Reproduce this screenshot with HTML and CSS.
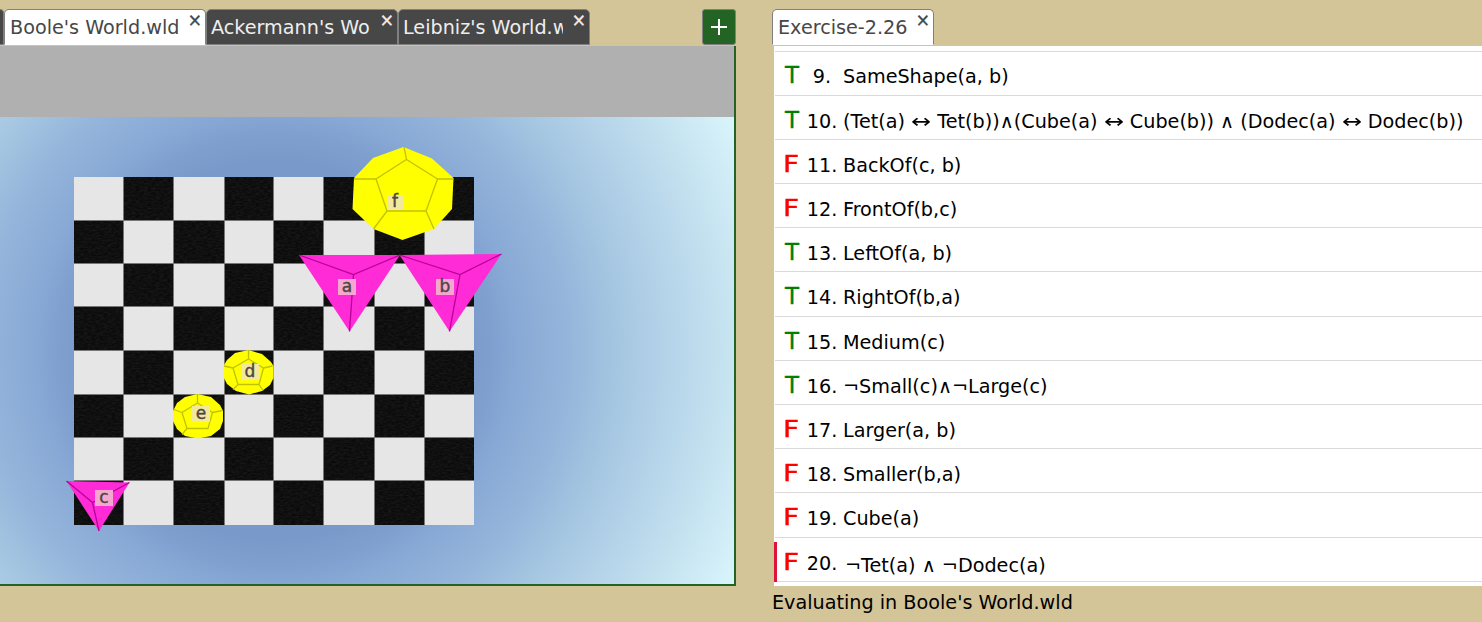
FILE: index.html
```html
<!DOCTYPE html>
<html lang="en">
<head>
<meta charset="utf-8">
<title>Boole's World</title>
<link rel="stylesheet" href="styles.css">
</head>
<body>
<main class="app">
  <section class="world">
    <div class="tabs">
      <div class="tab tab-edge"></div>
      <div class="tab tab-first active"><span class="name">Boole's World.wld</span><span class="close">×</span></div>
      <div class="tab"><span class="name">Ackermann's Wo</span><span class="close">×</span></div>
      <div class="tab"><span class="name">Leibniz's World.w</span><span class="close">×</span></div>
      <button class="add"><svg width="18" height="18" viewBox="0 0 18 18"><path d="M9 1v16M1 9h16"/></svg></button>
    </div>
    <div class="stage">
      <div class="toolbar"></div>
      <svg class="scene" width="734" height="467" viewBox="0 117 734 467">
        <defs>
          <radialGradient id="sky" gradientUnits="userSpaceOnUse" cx="275" cy="350" r="525">
            <stop offset="0.36" stop-color="#7999ca"/>
            <stop offset="0.41" stop-color="#7fa0cf"/>
            <stop offset="0.46" stop-color="#88a9d5"/>
            <stop offset="0.56" stop-color="#95b5db"/>
            <stop offset="0.64" stop-color="#a3c4e0"/>
            <stop offset="0.73" stop-color="#b2d1e8"/>
            <stop offset="0.84" stop-color="#c3e0ef"/>
            <stop offset="0.98" stop-color="#d9f5fc"/>
          </radialGradient>
          <filter id="grain" x="0" y="0" width="1" height="1" color-interpolation-filters="sRGB">
            <feTurbulence type="fractalNoise" baseFrequency="0.25 0.6" numOctaves="2" result="n"/>
            <feColorMatrix in="n" type="matrix" values="0 0 0 0 0.3  0 0 0 0 0.3  0 0 0 0 0.3  0.4 0 0 0 -0.12" result="g"/>
            <feComposite in="g" in2="SourceGraphic" operator="in" result="m"/>
            <feMerge><feMergeNode in="SourceGraphic"/><feMergeNode in="m"/></feMerge>
          </filter>
        </defs>
        <rect y="117" width="734" height="467" fill="url(#sky)"/>
        <rect x="74" y="177" width="400" height="348" fill="#e6e6e6"/>
        <g class="dark" filter="url(#grain)">
          <path d="M123.500 177h50v43.500h-50zM224.500 177h49.500v43.500h-49.500zM324 177h50v43.500h-50zM424.500 177h49.500v43.500h-49.500z"/>
          <path d="M74 220.500h49.500v43h-49.500zM174 220.500h50.500v43h-50.500zM274 220.500h50v43h-50zM374 220.500h50.500v43h-50.500z"/>
          <path d="M123.500 263.500h50v43h-50zM224.500 263.500h49.500v43h-49.500zM324 263.500h50v43h-50zM424.500 263.500h49.500v43h-49.500z"/>
          <path d="M74 306.500h49.500v44.500h-49.500zM174 306.500h50.500v44.500h-50.500zM274 306.500h50v44.500h-50zM374 306.500h50.500v44.500h-50.500z"/>
          <path d="M123.500 351h50v43.500h-50zM224.500 351h49.500v43.500h-49.500zM324 351h50v43.500h-50zM424.500 351h49.500v43.500h-49.500z"/>
          <path d="M74 394.500h49.500v43h-49.500zM174 394.500h50.500v43h-50.500zM274 394.500h50v43h-50zM374 394.500h50.500v43h-50.500z"/>
          <path d="M123.500 437.500h50v43h-50zM224.500 437.500h49.500v43h-49.500zM324 437.500h50v43h-50zM424.500 437.500h49.500v43h-49.500z"/>
          <path d="M74 480.500h49.500v44.500h-49.500zM174 480.500h50.500v44.500h-50.500zM274 480.500h50v44.500h-50zM374 480.500h50.500v44.500h-50.500z"/>
        </g>
        <path class="grid" d="M123.500 177v348M173.500 177v348M224.500 177v348M273.500 177v348M323.500 177v348M374 177v348M424.500 177v348M74 220.500h400M74 263.500h400M74 306.500h400M74 350.500h400M74 394.500h400M74 437.500h400M74 480.500h400"/>

        <g class="dodec">
          <path d="M403.500 147 432 158.500 453.500 178 452 209 434 229 402.500 240 373.500 229 352.500 209 354 178 373 158z"/>
          <path class="edge" d="M406.500 159.500 437.500 179 426 211H387L376 179zM406.500 159.500 404 147M437.500 179h16M426 211l8 18M387 211l-13.500 18M376 179h-22"/>
        </g>
        <g class="dodec">
          <path d="M248.500 350 262 354 271 362 273.500 366V378L270 385 262 391 249 394.500 236 391 227 384 223.500 377V366L227 360 235 353z"/>
          <path class="edge" d="M248.500 359 263.500 368 259 384.500H238L233 368zM248.500 359v-9M263.500 368l9-2M259 384.500l4 6M238 384.500l-5 5M233 368l-9-2"/>
        </g>
        <g class="dodec">
          <path d="M197.500 394 211 397 220 405 223 411V421L220 429 211 436 198 438.500 185 436 177 429 173 421V411L177 403 185 397z"/>
          <path class="edge" d="M197.500 403 212.500 412.500 208 428.500H187L182 412.500zM197.500 403v-9M212.500 412.500l10-2M187 428.500l-5 6M182 412.500l-8-3"/>
        </g>
        <g class="tet">
          <path d="M299 255H400L349.500 331.500z"/>
          <path class="edge" d="M299 255l54.500 19.500L400 255M353.500 274.500l-4 57"/>
        </g>
        <g class="tet">
          <path d="M399.500 255 501.500 254 449.500 331.500z"/>
          <path class="edge" d="M399.500 255l60.500 19.500 41.500-20.500M460 274.500l-10.500 57"/>
        </g>
        <g class="tet">
          <path d="M66.500 481 129.500 482.500 99 531z"/>
          <path class="edge" d="M66.500 481 92.500 502.500 129.500 482.500M92.500 502.500 99 531"/>
        </g>
        <g class="tags">
          <rect x="387" y="195" width="17" height="15"/><rect x="241" y="364" width="18" height="16"/><rect x="192" y="406" width="18" height="16"/>
          <g class="pink"><rect x="338" y="279" width="18" height="16"/><rect x="436" y="279" width="18" height="16"/><rect x="95" y="490" width="18" height="16"/></g>
        </g>
        <g class="letters">
          <text x="395" y="207">f</text><text x="250" y="377">d</text><text x="201" y="419">e</text>
          <text x="347" y="292">a</text><text x="445" y="292">b</text><text x="104" y="503">c</text>
        </g>
      </svg>
    </div>
  </section>
  <section class="sentences">
    <div class="tabs">
      <div class="tab tab-file active"><span class="name">Exercise-2.26</span><span class="close">×</span></div>
    </div>
    <div class="list">
      <div class="row"><b class="t">T</b><i>9.</i><span>SameShape(a, b)</span></div>
      <div class="row"><b class="t">T</b><i>10.</i><span>(Tet(a) <em>↔</em> Tet(b))∧(Cube(a) <em>↔</em> Cube(b)) ∧ (Dodec(a) <em>↔</em> Dodec(b))</span></div>
      <div class="row"><b class="f">F</b><i>11.</i><span>BackOf(c, b)</span></div>
      <div class="row"><b class="f">F</b><i>12.</i><span>FrontOf(b,c)</span></div>
      <div class="row"><b class="t">T</b><i>13.</i><span>LeftOf(a, b)</span></div>
      <div class="row"><b class="t">T</b><i>14.</i><span>RightOf(b,a)</span></div>
      <div class="row"><b class="t">T</b><i>15.</i><span>Medium(c)</span></div>
      <div class="row"><b class="t">T</b><i>16.</i><span>¬Small(c)∧¬Large(c)</span></div>
      <div class="row"><b class="f">F</b><i>17.</i><span>Larger(a, b)</span></div>
      <div class="row"><b class="f">F</b><i>18.</i><span>Smaller(b,a)</span></div>
      <div class="row"><b class="f">F</b><i>19.</i><span>Cube(a)</span></div>
      <div class="row current"><b class="f">F</b><i>20.</i><span>¬Tet(a) ∧ ¬Dodec(a)</span></div>
    </div>
    <footer class="status">Evaluating in Boole's World.wld</footer>
  </section>
</main>
</body>
</html>
```
FILE: styles.css
```css
* { box-sizing: border-box; }
body { margin: 0; background: #d4c598; color: #000; font: 19.2px/24px "DejaVu Sans", sans-serif; overflow: hidden; }
.app { display: flex; height: 622px; }
.world { width: 736px; flex: none; }
.tabs { display: flex; height: 46px; padding-top: 9px; }
.tab { display: flex; justify-content: space-between; width: 192px; height: 36px; padding: 0 3px 0 4px; background: #474747; color: #eee; border: 1px solid #808080; border-radius: 5px 5px 0 0; white-space: nowrap; flex: none; }
.tab-edge { width: 4px; padding: 0; border-left: 0; border-radius: 0 5px 0 0; }
.tab-first { width: 202px; padding-left: 5px; }
.tab.active { background: #fff; color: #474747; border-bottom-color: #fff; }
.name { width: 160px; padding-top: 6px; overflow: hidden; height: 32px; }
.tab-first .name { width: 172px; }
.close { font-size: 17px; line-height: 20px; -webkit-text-stroke: .4px; }
.add { display: grid; place-items: center; margin-left: auto; width: 34px; height: 36px; padding: 0; background: #236323; border: 1px solid #808080; border-radius: 3px; }
.add path { stroke: #fff; stroke-width: 2; }
.stage { height: 540px; border: solid #236323; border-width: 0 2px 2px 0; overflow: hidden; }
.toolbar { height: 71px; background: #b0b0b0; }
.scene { display: block; }
.dark { fill: #0b0b0b; }
.grid { stroke: #777; stroke-width: 1; shape-rendering: crispEdges; fill: none; }
.dodec { fill: #ff0; }
.tet { fill: #ff2bd6; }
.edge { fill: none; stroke-width: 1.3; }
.dodec .edge { stroke: #c2c200; }
.tet .edge { stroke: #b80096; }
.tags { fill: #f3e99c; }
.pink { fill: #f4a8d0; }
.letters { font: 17px "DejaVu Sans", sans-serif; text-anchor: middle; fill: #4c4540; stroke: #4c4540; stroke-width: .4; }
.sentences { flex: 1; min-width: 0; padding-left: 36px; }
.tab-file { width: 162px; padding-left: 5px; }
.tab-file .name { width: 135px; }
.list { height: 540px; margin-left: 2px; padding-top: 5px; background: #fff; overflow: hidden; }
.list::before { content: ""; display: block; height: 1px; margin-bottom: -1px; margin-left: 1px; background: #d9d9d9; }
.row { display: flex; align-items: center; height: 44.18px; padding-top: 8.8px; margin-left: 1px; border-bottom: 1px solid #d9d9d9; white-space: nowrap; }
.row:first-child { height: 44.8px; }
.row b { font-size: 23px; font-weight: 400; width: 14px; margin-left: 10px; margin-top: -4px; -webkit-text-stroke: .35px; }
.row .t { color: #008000; }
.row .f { color: #f00; transform: scaleX(1.22); transform-origin: 0 0; margin-left: 8px; margin-right: 2px; }
.row i { font-style: normal; width: 38px; text-align: center; margin-left: 4px; }
.row span { margin-left: 2px; }
.row em { display: inline-block; width: 20.1px; font-style: normal; transform: scaleX(1.25); transform-origin: 0 0; }
.current { position: relative; }
.current::before { content: ""; position: absolute; left: -1px; top: 4px; bottom: -1px; width: 3px; background: #dc143c; }
.current span { margin: 4px 0 0 4px; }
.status { padding-top: 5px; }
```
